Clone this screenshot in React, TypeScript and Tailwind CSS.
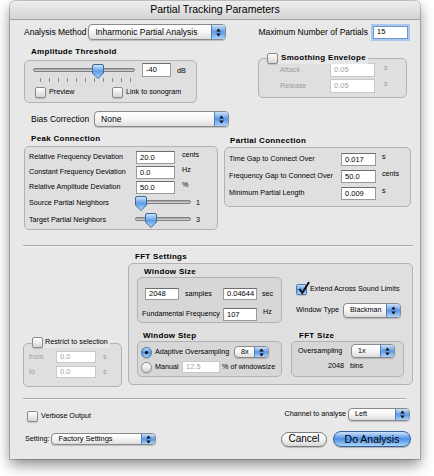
import React from 'react';

// Aqua-style dialog: Partial Tracking Parameters

const SMALL = 'text-[7.2px]';
const MAIN = 'text-[8.5px]';
const TITLE = 'font-bold text-[8px] tracking-[0.3px]';

function Field({
  value,
  className = '',
  disabled = false,
  focus = false,
}: {
  value: string;
  className?: string;
  disabled?: boolean;
  focus?: boolean;
}) {
  const tone = focus
    ? 'border-[#6f97cc] shadow-[0_0_0_2px_#aac7ee] text-black'
    : disabled
      ? 'border-[#c8c8c8] text-[#a3a3a3]'
      : 'border-[#9a9a9a] border-t-[#6e6e6e] text-black';
  return (
    <div className={`shrink-0 flex items-center bg-white border pl-[3px] text-[7.5px] leading-none ${tone} ${className}`}>
      {value}
    </div>
  );
}

function Arrows() {
  return (
    <svg width="5" height="9" viewBox="0 0 5 9">
      <path d="M2.5 0.5 L4.8 3.4 H0.2 Z M2.5 8.5 L4.8 5.6 H0.2 Z" fill="#111" />
    </svg>
  );
}

function Popup({ label, className = '', text = SMALL }: { label: string; className?: string; text?: string }) {
  return (
    <div className={`shrink-0 flex items-stretch overflow-hidden rounded-[4px] border border-[#8a8a8a] bg-gradient-to-b from-white via-[#f5f5f5] to-[#dddddd] shadow-[0_1px_1px_rgba(0,0,0,0.18)] ${className}`}>
      <span className={`flex-1 flex items-center pl-[6px] whitespace-nowrap ${text}`}>{label}</span>
      <span className="w-[14px] flex items-center justify-center border-l border-[#4f7fc0] bg-gradient-to-b from-[#cde2f9] via-[#5b98e6] to-[#a9d2f9]">
        <Arrows />
      </span>
    </div>
  );
}

function Check({ checked = false, className = '' }: { checked?: boolean; className?: string }) {
  return (
    <span
      className={`relative shrink-0 w-[11px] h-[11px] rounded-[2px] border shadow-[0_1px_1px_rgba(0,0,0,0.15)] ${
        checked
          ? 'border-[#4a78b3] bg-gradient-to-b from-[#c4dcf7] via-[#5f9be4] to-[#b0d6f9]'
          : 'border-[#8a8a8a] bg-gradient-to-b from-white to-[#d6d6d6]'
      } ${className}`}
    >
      {checked && (
        <svg className="absolute left-[1px] -top-[4px]" width="12" height="14" viewBox="0 0 12 14">
          <path d="M1.5 8 L4.3 12 L11 1" fill="none" stroke="#111" strokeWidth="2" />
        </svg>
      )}
    </span>
  );
}

function Radio({ on = false }: { on?: boolean }) {
  return (
    <span
      className={`shrink-0 w-[11px] h-[11px] rounded-full border flex items-center justify-center shadow-[0_1px_1px_rgba(0,0,0,0.15)] ${
        on
          ? 'border-[#3f6fae] bg-gradient-to-b from-[#c4dcf7] via-[#4f8fe0] to-[#b0d6f9]'
          : 'border-[#8a8a8a] bg-gradient-to-b from-white to-[#d6d6d6]'
      }`}
    >
      {on && <span className="w-[3px] h-[3px] rounded-full bg-black" />}
    </span>
  );
}

function Thumb() {
  return (
    <svg width="12" height="15" viewBox="0 0 12 15">
      <defs>
        <linearGradient id="thumbG" x1="0" y1="0" x2="0" y2="1">
          <stop offset="0" stopColor="#d6e8fb" />
          <stop offset="0.5" stopColor="#5f9ce8" />
          <stop offset="1" stopColor="#b8dcfc" />
        </linearGradient>
      </defs>
      <path d="M2 0.5 H10 Q11.5 0.5 11.5 2 V9 L6 14.5 L0.5 9 V2 Q0.5 0.5 2 0.5 Z" fill="url(#thumbG)" stroke="#3b679f" />
    </svg>
  );
}

function Slider({ className = '', pos }: { className?: string; pos: number }) {
  return (
    <div className={`relative shrink-0 h-[15px] ${className}`}>
      <div className="absolute inset-x-0 top-[4px] h-[4px] rounded-full border border-[#7f7f7f] bg-gradient-to-b from-[#9a9a9a] to-[#dedede]" />
      <div className="absolute top-0 flex" style={{ left: pos }}>
        <Thumb />
      </div>
    </div>
  );
}

function Group({ className = '', children }: { className?: string; children?: React.ReactNode }) {
  return <div className={`rounded-[5px] border border-[#b2b2b2] bg-black/[0.035] ${className}`}>{children}</div>;
}

function Legend({ children }: { children: React.ReactNode }) {
  return (
    <div className="absolute -top-[7px] left-[8px] flex items-center bg-[#e8e8e8] pr-[2px]">{children}</div>
  );
}

function Separator({ className = '' }: { className?: string }) {
  return <div className={`h-[2px] shrink-0 border-t border-[#a9a9a9] border-b border-b-[#f6f6f6] ${className}`} />;
}

const ticks = Array.from({ length: 11 }, (_, i) => i);

export default function App() {
  return (
    <div className="w-[434px] h-[476px] bg-white overflow-hidden font-['Liberation_Sans',Arial,sans-serif] text-black select-none">
      <div className="ml-[10px] mt-[1px] w-[410px] h-[458px] rounded-t-[5px] bg-[#e8e8e8] shadow-[0_0_0_1px_rgba(0,0,0,0.2),0_6px_14px_rgba(0,0,0,0.45)] flex flex-col overflow-hidden">
        {/* Title bar */}
        <div className="h-[19px] shrink-0 flex items-center justify-center text-[10.5px] bg-gradient-to-b from-[#eeeeee] to-[#d4d4d4] border-b border-[#a3a3a3]">
          Partial Tracking Parameters
        </div>

        <div className="flex flex-col pl-[14px] pr-[7px]">
          {/* Analysis method / max partials */}
          <div className="mt-[4px] h-[16px] flex items-center">
            <span className={MAIN}>Analysis Method</span>
            <Popup label="Inharmonic Partial Analysis" className="ml-[2px] w-[138px] h-[16px]" text={MAIN} />
            <span className={`ml-auto ${MAIN}`}>Maximum Number of Partials</span>
            <Field value="15" focus className="ml-[5px] mr-[5px] w-[35px] h-[13px]" />
          </div>

          {/* Amplitude threshold / smoothing */}
          <div className="flex items-start">
            <div className="w-[173px] shrink-0 flex flex-col">
              <div className={`mt-[6px] h-[12px] leading-[12px] pl-[7px] ${TITLE}`}>Amplitude Threshold</div>
              <Group className="mt-[2px] h-[43px] pt-[2px] flex flex-col">
                <div className="flex items-start pl-[8px]">
                  <Slider className="mt-[1px] w-[102px]" pos={59} />
                  <Field value="-40" className="ml-[7px] w-[29px] h-[14px]" />
                  <span className={`ml-[6px] self-center ${SMALL}`}>dB</span>
                </div>
                <div className="-mt-[1px] ml-[15px] w-[91px] h-[4px] flex justify-between">
                  {ticks.map((t) => (
                    <span key={t} className="w-px h-[4px] bg-[#8c8c8c]" />
                  ))}
                </div>
                <div className="mt-[5px] pl-[10px] flex items-center">
                  <div className="w-[77px] flex items-center">
                    <Check />
                    <span className={`ml-[3px] ${SMALL}`}>Preview</span>
                  </div>
                  <Check />
                  <span className={`ml-[3px] ${SMALL}`}>Link to sonogram</span>
                </div>
              </Group>
            </div>

            <div className="ml-[61px] w-[149px] mt-[18px]">
              <Group className="relative h-[40px] pt-[4px] flex flex-col gap-[2px]">
                <Legend>
                  <Check />
                  <span className={`ml-[3px] ${TITLE}`}>Smoothing Envelope</span>
                </Legend>
                {[
                  ['Attack', '0.05'],
                  ['Release', '0.05'],
                ].map(([l, v]) => (
                  <div key={l} className="h-[14px] flex items-center pl-[21px]">
                    <span className={`w-[50px] text-[#9d9d9d] ${SMALL}`}>{l}</span>
                    <Field value={v} disabled className="w-[45px] h-[14px]" />
                    <span className={`ml-[9px] self-start leading-[9px] text-[#9d9d9d] ${SMALL}`}>s</span>
                  </div>
                ))}
              </Group>
            </div>
          </div>

          {/* Bias correction */}
          <div className="mt-[8px] h-[16px] pl-[7px] flex items-center">
            <span className={MAIN}>Bias Correction</span>
            <Popup label="None" className="ml-[5px] w-[135px] h-[16px]" text={MAIN} />
          </div>

          {/* Peak / partial connection */}
          <div className="flex items-start">
            <div className="w-[194px] shrink-0 flex flex-col">
              <div className={`mt-[6px] h-[12px] leading-[12px] pl-[7px] ${TITLE}`}>Peak Connection</div>
              <Group className="mt-[1px] h-[84px] pt-[4px] pl-[4px] flex flex-col">
                {[
                  ['Relative Frequency Deviation', '20.0', 'cents'],
                  ['Constant Frequency Deviation', '0.0', 'Hz'],
                  ['Relative Amplitude Deviation', '50.0', '%'],
                ].map(([l, v, u]) => (
                  <div key={l} className="h-[13px] mb-[2px] flex items-center">
                    <span className={`w-[107px] whitespace-nowrap ${SMALL}`}>{l}</span>
                    <Field value={v} className="w-[39px] h-[13px]" />
                    <span className={`ml-[7px] self-start leading-[8px] ${SMALL}`}>{u}</span>
                  </div>
                ))}
                <div className="h-[14px] flex items-center">
                  <span className={`w-[106px] ${SMALL}`}>Source Partial Neighbors</span>
                  <Slider className="w-[56px]" pos={0} />
                  <span className={`ml-[5px] ${SMALL}`}>1</span>
                </div>
                <div className="mt-[3px] h-[14px] flex items-center">
                  <span className={`w-[106px] ${SMALL}`}>Target Partial Neighbors</span>
                  <Slider className="w-[56px]" pos={10} />
                  <span className={`ml-[5px] ${SMALL}`}>3</span>
                </div>
              </Group>
            </div>

            <div className="ml-[6px] w-[187px] mt-[8px] flex flex-col">
              <div className={`h-[12px] leading-[12px] pl-[6px] ${TITLE}`}>Partial Connection</div>
              <Group className="h-[60px] pt-[5px] pl-[4px] flex flex-col gap-[4px]">
                {[
                  ['Time Gap to Connect Over', '0.017', 's'],
                  ['Frequency Gap to Connect Over', '50.0', 'cents'],
                  ['Minimum Partial Length', '0.009', 's'],
                ].map(([l, v, u]) => (
                  <div key={l} className="h-[13px] flex items-center">
                    <span className={`w-[112px] whitespace-nowrap ${SMALL}`}>{l}</span>
                    <Field value={v} className="w-[35px] h-[13px]" />
                    <span className={`ml-[6px] self-start leading-[8px] ${SMALL}`}>{u}</span>
                  </div>
                ))}
              </Group>
            </div>
          </div>

          <Separator className="mt-[15px] -ml-[1px]" />

          {/* Restrict + FFT settings */}
          <div className="flex items-start">
            <div className="w-[99px] shrink-0 -ml-[1px] mt-[96px]">
              <Group className="relative h-[44px] pt-[7px] pl-[5px] flex flex-col">
                <Legend>
                  <Check />
                  <span className={`ml-[2px] ${SMALL}`}>Restrict to selection</span>
                </Legend>
                {[
                  ['from', '0.0'],
                  ['to', '0.0'],
                ].map(([l, v], i) => (
                  <div key={l} className={`h-[12px] flex items-center ${i ? 'mt-[3px]' : ''}`}>
                    <span className={`w-[27px] text-[#9d9d9d] ${SMALL}`}>{l}</span>
                    <Field value={v} disabled className="w-[40px] h-[12px]" />
                    <span className={`ml-[7px] text-[#9d9d9d] ${SMALL}`}>s</span>
                  </div>
                ))}
              </Group>
            </div>

            <div className="ml-[6px] w-[285px] shrink-0 flex flex-col">
              <div className={`mt-[4px] h-[12px] leading-[12px] pl-[7px] ${TITLE}`}>FFT Settings</div>
              <Group className="h-[122px] pt-[2px] pl-[8px] flex flex-col">
                <div className="flex items-start">
                  <div className="w-[145px] shrink-0 flex flex-col">
                    <div className={`h-[11px] leading-[11px] pl-[7px] ${TITLE}`}>Window Size</div>
                    <Group className="h-[46px] pt-[10px] flex flex-col">
                      <div className="h-[12px] pl-[7px] flex items-center">
                        <Field value="2048" className="w-[34px] h-[12px]" />
                        <span className={`w-[44px] pl-[6px] ${SMALL}`}>samples</span>
                        <Field value="0.04644" className="w-[34px] h-[12px]" />
                        <span className={`ml-[5px] ${SMALL}`}>sec</span>
                      </div>
                      <div className="mt-[8px] h-[13px] pl-[4px] flex items-center">
                        <span className={`w-[81px] whitespace-nowrap ${SMALL}`}>Fundamental Frequency</span>
                        <Field value="107" className="w-[34px] h-[13px]" />
                        <span className={`ml-[6px] self-start leading-[8px] ${SMALL}`}>Hz</span>
                      </div>
                    </Group>
                  </div>
                  <div className="ml-[14px] flex flex-col">
                    <div className="mt-[18px] flex items-center">
                      <Check checked />
                      <span className={`ml-[3px] whitespace-nowrap ${SMALL}`}>Extend Across Sound Limits</span>
                    </div>
                    <div className="mt-[8px] h-[15px] flex items-center">
                      <span className={`w-[47px] ${SMALL}`}>Window Type</span>
                      <Popup label="Blackman" className="w-[58px] h-[15px]" />
                    </div>
                  </div>
                </div>

                <div className="mt-[7px] flex items-start">
                  <div className="w-[145px] shrink-0 flex flex-col">
                    <div className={`h-[11px] leading-[11px] pl-[6px] ${TITLE}`}>Window Step</div>
                    <Group className="h-[36px] pt-[4px] pl-[3px] flex flex-col">
                      <div className="h-[12px] flex items-center">
                        <Radio on />
                        <span className={`ml-[3px] w-[79px] whitespace-nowrap ${SMALL}`}>Adaptive Oversampling</span>
                        <Popup label="8x" className="w-[35px] h-[12px]" />
                      </div>
                      <div className="mt-[3px] h-[12px] flex items-center">
                        <Radio />
                        <span className={`ml-[3px] w-[27px] ${SMALL}`}>Manual</span>
                        <Field value="12.5" disabled className="w-[38px] h-[12px]" />
                        <span className={`ml-[2px] whitespace-nowrap ${SMALL}`}>% of windowsize</span>
                      </div>
                    </Group>
                  </div>
                  <div className="ml-[9px] w-[113px] shrink-0 flex flex-col">
                    <div className={`h-[11px] leading-[11px] pl-[8px] ${TITLE}`}>FFT Size</div>
                    <Group className="h-[36px] pt-[2px] flex flex-col">
                      <div className="h-[14px] pl-[6px] flex items-center">
                        <span className={`w-[53px] ${SMALL}`}>Oversampling</span>
                        <Popup label="1x" className="w-[44px] h-[14px]" />
                      </div>
                      <div className={`mt-[3px] pl-[36px] flex gap-[6px] ${SMALL}`}>
                        <span>2048</span>
                        <span>bins</span>
                      </div>
                    </Group>
                  </div>
                </div>
              </Group>
            </div>
          </div>

          <Separator className="mt-[11px] -ml-[1px] mr-[7px]" />

          {/* Verbose / channel */}
          <div className="mt-[8px] h-[13px] flex items-center">
            <Check className="ml-[3px] mt-[4px]" />
            <span className={`ml-[3px] mt-[4px] ${SMALL}`}>Verbose Output</span>
            <span className={`ml-auto ${SMALL}`}>Channel to analyse</span>
            <Popup label="Left" className="ml-[2px] mr-[3px] w-[62px] h-[13px]" />
          </div>

          {/* Setting / buttons */}
          <div className="mt-[10px] h-[16px] flex items-center">
            <span className={`ml-[1px] ${SMALL}`}>Setting:</span>
            <Popup label="Factory Settings" className="ml-[2px] w-[105px] h-[12px]" text="text-[7.5px]" />
            <button className="ml-auto w-[46px] h-[15px] rounded-full border border-[#7c7c7c] bg-gradient-to-b from-white via-[#f3f3f3] to-[#d8d8d8] shadow-[0_1px_1px_rgba(0,0,0,0.2)] text-[10px] leading-none">
              Cancel
            </button>
            <button className="ml-[6px] mr-[2px] w-[78px] h-[16px] rounded-full border border-[#35609e] bg-gradient-to-b from-[#cfe3fa] via-[#4c8de3] to-[#a9d6fb] shadow-[0_1px_1px_rgba(0,0,0,0.25)] text-[10.5px] leading-none">
              Do Analysis
            </button>
          </div>
        </div>
      </div>
    </div>
  );
}
